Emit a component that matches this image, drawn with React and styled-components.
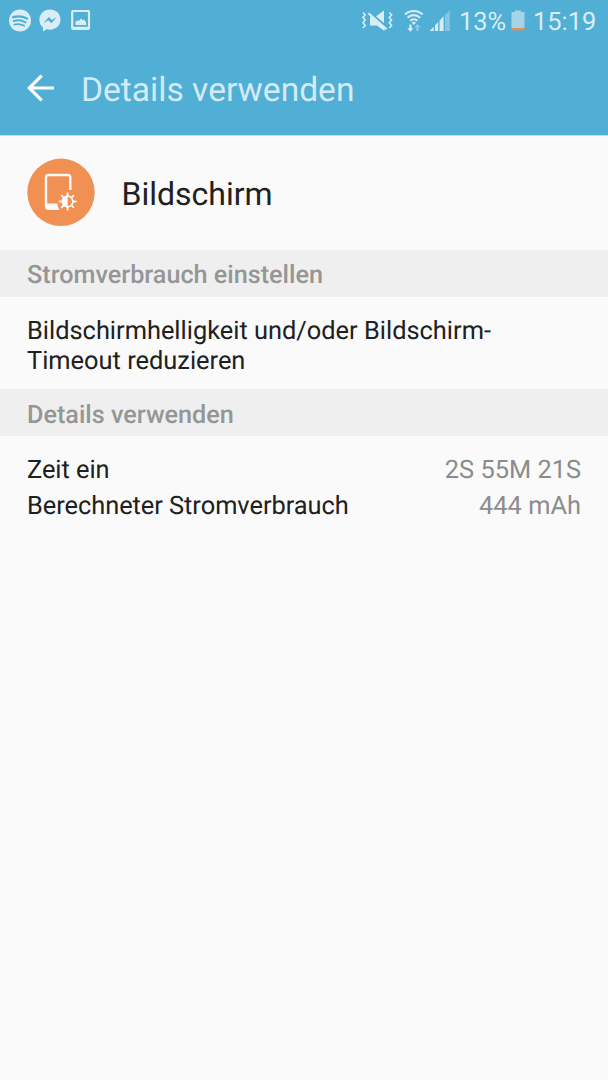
import styled, { createGlobalStyle } from "styled-components";

const GlobalStyle = createGlobalStyle`
  * {
    box-sizing: border-box;
  }

  body {
    margin: 0;
    background: #fafafa;
    font-family: Roboto, "Liberation Sans", sans-serif;
    text-rendering: geometricPrecision;
  }
`;

const Screen = styled.main`
  display: flex;
  flex-direction: column;
  min-height: 100vh;
  background: #fafafa;
  color: #202020;
`;

const Header = styled.header`
  height: 136px;
  background: #51aed5;
  border-bottom: 1px solid #c9d8df;
`;

const StatusBar = styled.div`
  display: flex;
  align-items: center;
  height: 42px;
  padding: 0 12px 0 8px;
  color: #d8edf6;
`;

const Icon = styled.svg`
  display: block;
  flex: none;
  margin-left: ${props => props.$gap || 0}px;
`;

const StatusText = styled.span`
  width: ${props => props.$width}px;
  padding-top: 2px;
  font-size: 25.4px;
  line-height: 42px;
  margin-left: ${props => props.$gap}px;
  white-space: nowrap;
`;

const Spacer = styled.div`
  flex: 1;
`;

const TitleBar = styled.div`
  display: flex;
  align-items: center;
  height: 92px;
  padding-left: 26px;
`;

const BackButton = styled.button`
  padding: 0;
  border: 0;
  background: none;
`;

const Title = styled.h1`
  margin: 5px 0 0 25px;
  color: #d3ebf5;
  font-size: 33.6px;
  font-weight: 400;
  line-height: 40px;
`;

const AppRow = styled.section`
  display: flex;
  align-items: center;
  height: 114px;
  padding: 0 0 2px 27px;
`;

const AppName = styled.h2`
  margin: 3px 0 0 26.5px;
  font-size: 32px;
  font-weight: 400;
  line-height: 40px;
`;

const SectionTitle = styled.h3`
  height: 47px;
  margin: 0;
  padding-left: 27px;
  background: #efefef;
  color: #969696;
  font-size: 25.2px;
  font-weight: 500;
  line-height: ${props => props.$line || 51}px;
`;

const Tip = styled.p`
  height: 92px;
  margin: 0;
  padding: 19px 27px 0;
  font-size: 25.4px;
  line-height: 30px;
`;

const Stats = styled.dl`
  margin: 0;
  padding: 16px 27px;
`;

const Stat = styled.div`
  display: flex;
  justify-content: space-between;
  font-size: 25.4px;
  line-height: 36px;
`;

const Label = styled.dt`
  letter-spacing: -0.04px;
`;

const Value = styled.dd`
  margin: 0;
  color: #8c8c8c;
`;

const SpotifyIcon = () => (
  <Icon width="24" height="24" viewBox="0 0 24 24">
    <circle cx="12" cy="11.5" r="11" fill="currentColor" />
    <g fill="none" stroke="#51aed5" strokeLinecap="round">
      <path d="M5.2 8.1c4.8-1.3 9.6-.8 13.8 1.4" strokeWidth="2.4" />
      <path d="M5.7 12c4.2-1.2 8.2-.7 11.9 1.3" strokeWidth="2" />
      <path d="M6.3 15.6c3.6-.9 6.8-.5 9.9 1.2" strokeWidth="1.7" />
    </g>
  </Icon>
);

const MessengerIcon = () => (
  <Icon $gap={7} width="22" height="24" viewBox="0 0 22 24">
    <path
      d="M11 .6C5 .6.4 5 .4 10.7c0 3.2 1.3 5.9 3.6 7.8V22.6l3.6-2.3c1.1.3 2.2.4 3.4.4 6 0 10.5-4.4 10.500-10.1S17 .6 11 .6z"
      fill="currentColor"
    />
    <path d="M4.3 14.2L9.8 8l3 3 5.1-3-5.5 6.3-3.1-3z" fill="#51aed5" />
  </Icon>
);

const ImageIcon = () => (
  <Icon $gap={10} width="20" height="22" viewBox="0 0 20 22">
    <rect x="1.200" y="1" width="16.8" height="18" rx="1" fill="none" stroke="currentColor" strokeWidth="2.2" />
    <path d="M4.5 15v-3.200l2-1.600 1.400.9 2.200-2.800 1.500 2 1.500-.8 2 2.700V15z" fill="currentColor" />
    <path d="M1.200 18h16.800" stroke="currentColor" strokeWidth="2.5" />
  </Icon>
);

const MuteVibrateIcon = () => (
  <Icon width="32" height="24" viewBox="0 0 32 24">
    <path d="M8 7.5h3l11.5 10.300V22l-7.700-5.500H8z" fill="currentColor" />
    <path d="M14 7.200L22 1.500v12.500z" fill="currentColor" />
    <path d="M6.500 4.300L24.500 20.300" stroke="currentColor" strokeWidth="2.200" />
    <path
      d="M1 3.500l2.200 2.300L1 8.400l2.200 2.700L1 13.800l2.200 2.700L1 19M27.300 3.500l2.300 2.300-2.300 2.600 2.300 2.700-2.300 2.700 2.300 2.700-2.300 2.500"
      fill="none"
      stroke="currentColor"
      strokeWidth="1.6"
    />
  </Icon>
);

const WifiIcon = () => (
  <Icon $gap={10} width="20" height="24" viewBox="0 0 20 24">
    <g fill="none" stroke="currentColor" strokeWidth="2.1">
      <path d="M1 5.400c5-4.600 12.600-4.600 17.600 0" />
      <path d="M3.500 8.700c3.600-3.400 9-3.400 12.600 0" />
      <path d="M6.200 11.700c2.100-1.900 5.100-1.900 7.200 0" />
    </g>
    <path d="M7.600 13.600c1.300-1 3.100-1 4.400 0l-2.200 2.300z" fill="currentColor" />
    <path d="M5.300 15.500h2.200v3.700h2l-3.100 3.600-3.100-3.600h2z" fill="currentColor" />
    <path d="M12.300 22v-3.400h-2l3.100-3.500 3.100 3.500h-2V22z" fill="#8fcbe4" />
  </Icon>
);

const SignalIcon = () => (
  <Icon $gap={5} width="22" height="24" viewBox="0 0 22 24">
    <path d="M.7 22l4-4.300V22zM6 16.300l3.200-3.400V22H6zM10.600 11.500l4-4.200V22h-4z" fill="currentColor" />
    <path d="M16 5.800L20.700 1.500V22H16z" fill="#87c6e1" />
  </Icon>
);

const BatteryIcon = () => (
  <Icon $gap={5} width="14" height="22" viewBox="0 0 14 22">
    <path d="M4 .5h6V2h3.500v16H.5V2H4z" fill="#a4d4e6" />
    <path d="M.5 18h13v2.300H.5z" fill="#ef8b5b" />
  </Icon>
);

const BackIcon = () => (
  <Icon width="30" height="30" viewBox="0 0 30 30" fill="none" stroke="#fff" strokeWidth="3.2">
    <path d="M15.700 2.600L3.300 15l12.400 12.400M3.500 15H28" />
  </Icon>
);

const rays = [0, 45, 90, 135, 180, 225, 270, 315];

const DisplayIcon = () => (
  <Icon width="68" height="68" viewBox="0 0 68 68">
    <circle cx="34" cy="34.3" r="33.7" fill="#f09052" />
    <path
      d="M43.300 32V19.500q0-2.500-2.500-2.500H21.500Q19 17 19 19.500V48q0 2.500 2.500 2.500H31"
      fill="none"
      stroke="#fafafa"
      strokeWidth="2.4"
    />
    <path d="M18.500 45.500h11.700q.4 3.500 2.400 6.200H21q-2.500 0-2.500-2.500z" fill="#fafafa" />
    <g transform="translate(40.6 43.5)">
      <circle r="5.3" fill="none" stroke="#fafafa" strokeWidth="1.7" />
      <path d="M0-5.300a5.300 5.300 0 0 0 0 10.600z" fill="#fafafa" />
      {rays.map(angle => (
        <path key={angle} d="M0-5.500V-9" stroke="#fafafa" strokeWidth="1.8" transform={`rotate(${angle})`} />
      ))}
    </g>
  </Icon>
);

const stats = [
  { label: "Zeit ein", value: "2S 55M 21S" },
  { label: "Berechneter Stromverbrauch", value: "444 mAh" },
];

const App = () => (
  <Screen>
    <GlobalStyle />
    <Header>
      <StatusBar>
        <SpotifyIcon />
        <MessengerIcon />
        <ImageIcon />
        <Spacer />
        <MuteVibrateIcon />
        <WifiIcon />
        <SignalIcon />
        <StatusText $gap={8} $width={47}>13%</StatusText>
        <BatteryIcon />
        <StatusText $gap={8} $width={63}>15:19</StatusText>
      </StatusBar>
      <TitleBar>
        <BackButton aria-label="Zurück">
          <BackIcon />
        </BackButton>
        <Title>Details verwenden</Title>
      </TitleBar>
    </Header>

    <AppRow>
      <DisplayIcon />
      <AppName>Bildschirm</AppName>
    </AppRow>

    <SectionTitle>Stromverbrauch einstellen</SectionTitle>
    <Tip>Bildschirmhelligkeit und/oder Bildschirm-Timeout reduzieren</Tip>

    <SectionTitle $line={53}>Details verwenden</SectionTitle>
    <Stats>
      {stats.map(stat => (
        <Stat key={stat.label}>
          <Label>{stat.label}</Label>
          <Value>{stat.value}</Value>
        </Stat>
      ))}
    </Stats>
  </Screen>
);

export default App;
